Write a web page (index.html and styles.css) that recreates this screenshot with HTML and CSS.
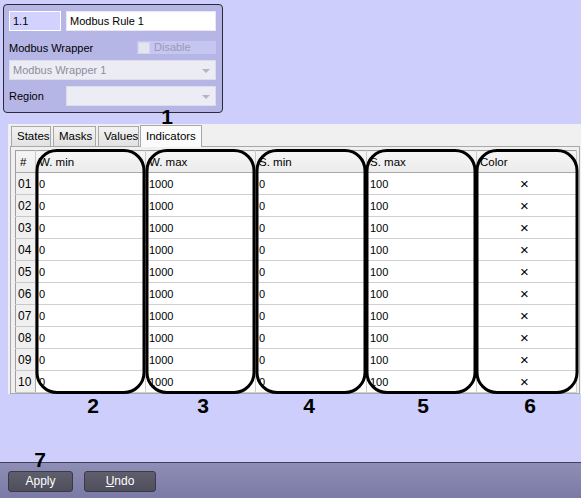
FILE: index.html
```html
<!DOCTYPE html>
<html>
<head>
<meta charset="utf-8">
<link rel="stylesheet" href="styles.css">
</head>
<body>
<div class="page">
  <div class="panel">
    <div class="row r1">
      <div class="field idbox">1.1</div>
      <div class="field namebox">Modbus Rule 1</div>
    </div>
    <div class="row r2">
      <span class="lbl">Modbus Wrapper</span>
      <div class="disable"><span class="chk"></span><span class="distext">Disable</span></div>
    </div>
    <div class="row r3">
      <div class="combo wide"><span class="ctext">Modbus Wrapper 1</span><span class="arrow"></span></div>
    </div>
    <div class="row r4">
      <span class="lbl">Region</span>
      <div class="combo region"><span class="ctext"></span><span class="arrow"></span></div>
    </div>
  </div>

  <div class="work">
    <div class="tabs">
      <div class="tab">States</div>
      <div class="tab">Masks</div>
      <div class="tab">Values</div>
      <div class="tab active">Indicators</div>
    </div>
    <div class="pane">
      <table class="grid">
        <colgroup>
          <col class="c0"><col class="c1"><col class="c2"><col class="c3"><col class="c4"><col class="c5">
        </colgroup>
        <thead>
          <tr><th class="hn">#</th><th>W. min</th><th>W. max</th><th>S. min</th><th>S. max</th><th>Color</th></tr>
        </thead>
        <tbody>
          <tr><td class="num">01</td><td>0</td><td>1000</td><td>0</td><td>100</td><td class="x">×</td></tr>
          <tr><td class="num">02</td><td>0</td><td>1000</td><td>0</td><td>100</td><td class="x">×</td></tr>
          <tr><td class="num">03</td><td>0</td><td>1000</td><td>0</td><td>100</td><td class="x">×</td></tr>
          <tr><td class="num">04</td><td>0</td><td>1000</td><td>0</td><td>100</td><td class="x">×</td></tr>
          <tr><td class="num">05</td><td>0</td><td>1000</td><td>0</td><td>100</td><td class="x">×</td></tr>
          <tr><td class="num">06</td><td>0</td><td>1000</td><td>0</td><td>100</td><td class="x">×</td></tr>
          <tr><td class="num">07</td><td>0</td><td>1000</td><td>0</td><td>100</td><td class="x">×</td></tr>
          <tr><td class="num">08</td><td>0</td><td>1000</td><td>0</td><td>100</td><td class="x">×</td></tr>
          <tr><td class="num">09</td><td>0</td><td>1000</td><td>0</td><td>100</td><td class="x">×</td></tr>
          <tr><td class="num">10</td><td>0</td><td>1000</td><td>0</td><td>100</td><td class="x">×</td></tr>
        </tbody>
      </table>
    </div>
  </div>

  <div class="footer">
    <div class="btn apply">Apply</div>
    <div class="btn undo"><u>U</u>ndo</div>
  </div>

  <svg class="overlay" width="581" height="498" viewBox="0 0 581 498">
    <g fill="none" stroke="#000" stroke-width="3">
      <rect x="37" y="150.5" width="107" height="242" rx="20" ry="20"/>
      <rect x="147" y="150.5" width="107" height="242" rx="20" ry="20"/>
      <rect x="257" y="150.5" width="108" height="242" rx="20" ry="20"/>
      <rect x="367" y="150.5" width="108" height="242" rx="20" ry="20"/>
      <rect x="477" y="150.5" width="100" height="242" rx="20" ry="20"/>
    </g>
    <g class="nums">
      <text x="167" y="124">1</text>
      <text x="93" y="413">2</text>
      <text x="203" y="413">3</text>
      <text x="309" y="413">4</text>
      <text x="423" y="413">5</text>
      <text x="530" y="413">6</text>
      <text x="40" y="467">7</text>
    </g>
  </svg>
</div>
</body>
</html>
```
FILE: styles.css
```css
* { box-sizing: border-box; }
html, body { margin: 0; padding: 0; }
body {
  background: #cecefc;
  font-family: "Liberation Sans", Arial, sans-serif;
  font-size: 11px;
  color: #000;
}
.page {
  position: relative;
  width: 581px;
  height: 498px;
  overflow: hidden;
  display: flex;
  flex-direction: column;
}

/* top panel */
.panel {
  margin: 4px 0 0 3px;
  width: 220px;
  height: 109px;
  border: 1px solid #2a2a3a;
  border-radius: 4px;
  background: #b6b6e6;
  padding: 6px 0 0 5px;
  display: flex;
  flex-direction: column;
}
.row { display: flex; align-items: center; width: 207px; }
.r1 { height: 20px; gap: 5px; }
.r2 { height: 13px; margin-top: 10px; justify-content: space-between; }
.r3 { height: 20px; margin-top: 6px; }
.r4 { height: 20px; margin-top: 6px; justify-content: space-between; }
.field {
  height: 20px;
  border: 1px solid #ffffff;
  padding: 3px 3px 0 3px;
  line-height: 13px;
}
.idbox { width: 52px; background: #d2d2fe; }
.namebox { width: 150px; background: #ffffff; border-color: #e8e8f8; }
.disable {
  width: 79px;
  height: 13px;
  background: #c6c6f2;
  display: flex;
  align-items: center;
}
.chk {
  width: 12px; height: 12px;
  margin-left: 1px;
  background: #e4e4f2;
  border: 1px solid #d4d4ea;
}
.distext { margin-left: 4px; color: #9a9ab0; line-height: 13px; }
.combo {
  height: 20px;
  background: #ececf4;
  border: 1px solid #dcdcec;
  display: flex;
  align-items: center;
  justify-content: space-between;
  padding: 0 5px 0 3px;
}
.combo.wide { width: 207px; }
.combo.region { width: 150px; }
.ctext { color: #8c8c9c; }
.arrow {
  width: 0; height: 0;
  border-left: 4px solid transparent;
  border-right: 4px solid transparent;
  border-top: 4px solid #b4b4c4;
  margin-top: 2px;
}

/* work area */
.work {
  margin: 11px 0 0 8px;
  height: 270px;
  background: #f0f0f0;
  display: flex;
  flex-direction: column;
}
.tabs {
  display: flex;
  align-items: flex-end;
  height: 22px;
  padding: 1px 0 0 3px;
  gap: 2px;
}
.tab {
  height: 20px;
  padding: 0 5px;
  border: 1px solid #a8a8a8;
  border-bottom: none;
  background: linear-gradient(#f2f2f2, #e2e2e2);
  line-height: 19px;
  font-size: 11.5px;
}
.tab:nth-child(1) { width: 40px; }
.tab:nth-child(2) { width: 43px; }
.tab:nth-child(3) { width: 41px; margin-right: -1px; }
.tab.active {
  width: 62px;
  height: 22px;
  background: #fbfbfb;
  margin-bottom: -1px;
  position: relative;
  z-index: 1;
  line-height: 20px;
  padding-bottom: 2px;
}
.pane {
  margin-left: 2px;
  width: 570px;
  height: 248px;
  border: 1px solid #a8a8a8;
  padding: 3px 0 0 4px;
}
.grid {
  border-collapse: collapse;
  table-layout: fixed;
  width: 561px;
  border: 1px solid #a0a0a0;
  font-size: 11px;
}
.c0 { width: 20px; }
.c1 { width: 110px; }
.c2 { width: 110px; }
.c3 { width: 111px; }
.c4 { width: 110px; }
.c5 { width: 100px; }
.grid th {
  height: 22px;
  text-align: left;
  font-weight: normal;
  font-size: 11.5px;
  padding: 0 0 0 3px;
  background: linear-gradient(#f6f6f6, #ebebeb);
  border-right: 1px solid #c8c8c8;
  border-bottom: 1px solid #a8a8a8;
}
.grid th.hn { padding-left: 4px; }
.grid td {
  height: 22px;
  padding: 0 0 0 3px;
  background: #ffffff;
  border-right: 1px solid #d0d0d0;
  border-bottom: 1px solid #d0d0d0;
  white-space: nowrap;
}
.grid td.num {
  background: #f0f0f0;
  padding-left: 2px;
  font-size: 12px;
  border-right: 1px solid #a8a8a8;
  border-bottom: 1px solid #c8c8c8;
}
.grid td.x { text-align: center; padding: 0 4px 0 0; font-size: 15px; }

/* footer */
.footer {
  margin-top: 68px;
  flex: 1;
  border-top: 1px solid #404058;
  background: linear-gradient(#8e8eb6, #7a7aa6);
  display: flex;
  align-items: flex-start;
  padding: 8px 0 0 8px;
  gap: 11px;
}
.btn {
  height: 21px;
  border: 1px solid #3a3a46;
  border-radius: 3px;
  background: linear-gradient(#5e5e6c, #4e4e5c);
  color: #ffffff;
  font-size: 12px;
  text-align: center;
  line-height: 19px;
}
.apply { width: 65px; }
.undo { width: 72px; }

/* annotation overlay */
.overlay {
  position: absolute;
  left: 0; top: 0;
  pointer-events: none;
}
.nums text {
  font-family: "Liberation Sans", Arial, sans-serif;
  font-weight: bold;
  font-size: 21px;
  text-anchor: middle;
  fill: #000;
}
```
